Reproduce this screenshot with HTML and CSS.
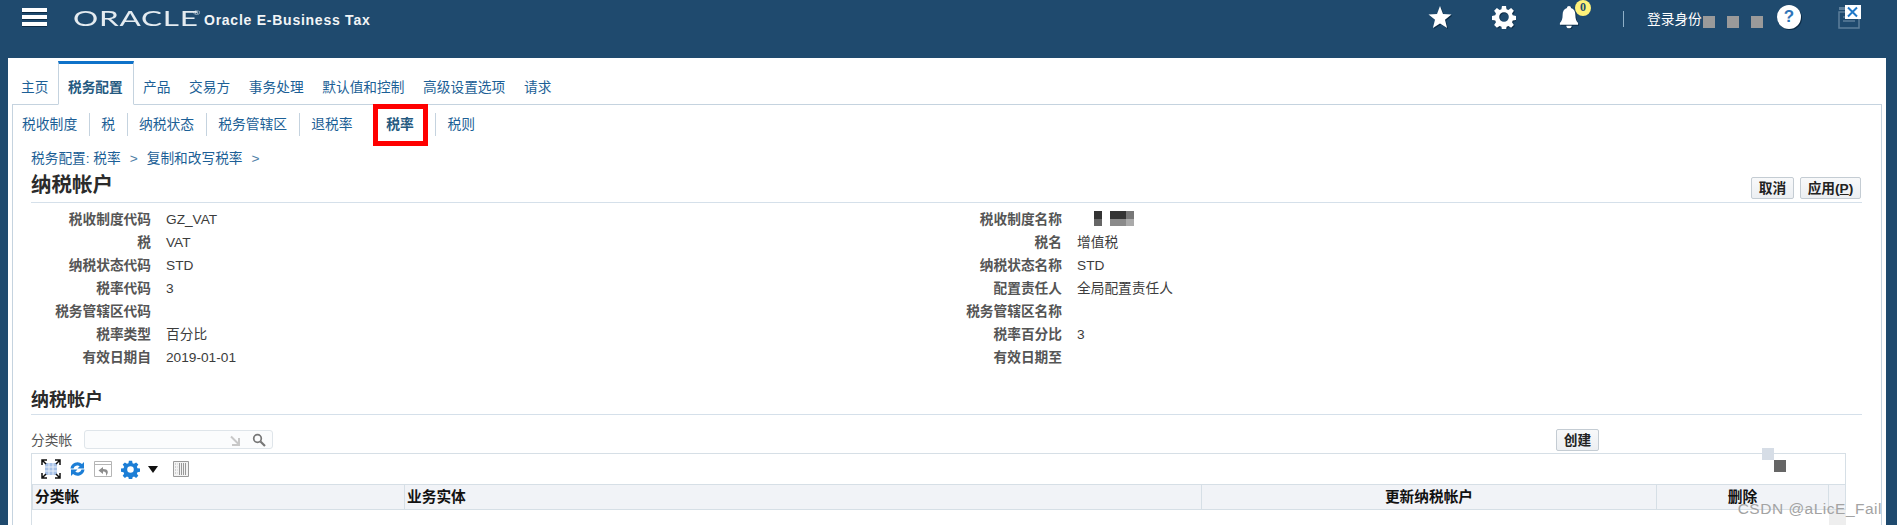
FILE: index.html
```html
<!DOCTYPE html>
<html lang="zh-CN">
<head>
<meta charset="utf-8">
<title>Oracle E-Business Tax</title>
<link rel="stylesheet" href="styles.css">
</head>
<body>
<header class="topbar">
  <div class="burger"><i></i><i></i><i></i></div>
  <span class="logo">ORACLE<sup>®</sup></span>
  <span class="product">Oracle E-Business Tax</span>
  <div class="topright">
    <svg class="ti star" width="24" height="24" viewBox="0 0 24 24"><path class="shadow" d="M12 1l3 7.900 8.500.6-6.500 5.300 2.100 8.200-7.100-4.500-7.100 4.500 2.100-8.200L.5 9.500 9 8.900z"/></svg>
    <svg class="ti gear" width="24" height="24" viewBox="0 0 26 26"><path class="shadow" fill-rule="evenodd" d="M10.800 1h4.400l.6 3.500 2 .8 2.900-2 3 3-2 2.900.8 2 3.500.6v4.400l-3.500.6-.8 2 2 2.900-3 3-2.900-2-2 .8-.6 3.500h-4.400l-.6-3.500-2-.8-2.900 2-3-3 2-2.900-.8-2-3.500-.6v-4.400l3.500-.6.800-2-2-2.900 3-3 2.900 2 2-.8zM13 7.800a5.200 5.200 0 1 0 0 10.400 5.200 5.200 0 0 0 0-10.400z"/></svg>
    <div class="bellwrap">
      <svg class="ti bell" width="20" height="24" viewBox="0 0 22 26"><path class="shadow" d="M11 1c1.300 0 2.200.9 2.200 2 3.500.9 4.800 3.800 4.800 7.500 0 4.500 1 7 3 9v2H1v-2c2-2 3-4.500 3-9C4 6.800 5.300 3.900 8.800 3c0-1.100.9-2 2.200-2zM8 22.500h6c0 1.800-1.300 3-3 3s-3-1.200-3-3z"/></svg>
      <span class="badge">0</span>
    </div>
    <span class="vsep"></span>
    <span class="login">登录身份</span>
    <span class="mask"></span><span class="mask"></span><span class="mask last"></span>
    <span class="help">?</span>
    <div class="logout">
      <svg width="22" height="24" viewBox="0 0 22 24"><g fill="none" stroke="#5d7f9b" stroke-width="1.500"><path d="M1 6h20v16H1z"/><path d="M1 2.500h14" stroke-width="3"/><path d="M5 11h12M5 15h12" /></g></svg>
      <span class="closex"><svg width="15" height="14" viewBox="0 0 15 14"><path d="M3 2.500l9 9M12 2.500l-9 9" stroke="#1f78c8" stroke-width="2" fill="none"/></svg></span>
    </div>
  </div>
</header>

<main class="panel">
  <nav class="tabs">
    <a class="tab first">主页</a>
    <a class="tab active">税务配置</a>
    <a class="tab">产品</a>
    <a class="tab">交易方</a>
    <a class="tab">事务处理</a>
    <a class="tab">默认值和控制</a>
    <a class="tab">高级设置选项</a>
    <a class="tab">请求</a>
  </nav>
  <section class="body">
    <nav class="subtabs">
      <a class="sub">税收制度</a>
      <a class="sub">税</a>
      <a class="sub">纳税状态</a>
      <a class="sub">税务管辖区</a>
      <a class="sub">退税率</a>
      <a class="sub current">税率</a>
      <a class="sub">税则</a>
    </nav>
    <div class="content">
      <div class="crumbs"><a>税务配置: 税率</a><span class="gt">&gt;</span><a>复制和改写税率</a><span class="gt">&gt;</span></div>
      <div class="titlebar">
        <h1>纳税帐户</h1>
        <div class="actions"><button class="btn">取消</button><button class="btn wide">应用(<u>P</u>)</button></div>
      </div>
      <dl class="info">
        <dt>税收制度代码</dt><dd>GZ_VAT</dd><dt>税收制度名称</dt><dd class="blurred"><span class="px"></span></dd>
        <dt>税</dt><dd>VAT</dd><dt>税名</dt><dd>增值税</dd>
        <dt>纳税状态代码</dt><dd>STD</dd><dt>纳税状态名称</dt><dd>STD</dd>
        <dt>税率代码</dt><dd>3</dd><dt>配置责任人</dt><dd>全局配置责任人</dd>
        <dt>税务管辖区代码</dt><dd></dd><dt>税务管辖区名称</dt><dd></dd>
        <dt>税率类型</dt><dd>百分比</dd><dt>税率百分比</dt><dd>3</dd>
        <dt>有效日期自</dt><dd>2019-01-01</dd><dt>有效日期至</dt><dd></dd>
      </dl>
      <h2>纳税帐户</h2>
      <div class="filter">
        <label>分类帐</label>
        <div class="search">
          <svg width="12" height="12" viewBox="0 0 12 12"><path d="M2 1.500l8 8M10 3v7H3" stroke="#c8c8c8" stroke-width="2" fill="none"/></svg>
          <svg width="14" height="14" viewBox="0 0 14 14"><circle cx="5.500" cy="5.500" r="3.800" fill="none" stroke="#777" stroke-width="1.700"/><path d="M8.500 8.500l4.500 4.500" stroke="#777" stroke-width="2.200"/></svg>
        </div>
        <button class="btn create">创建</button>
      </div>
      <div class="tablebox">
        <div class="toolbar">
          <svg class="tool" width="20" height="20" viewBox="0 0 20 20"><path d="M4 4h12v12H4z" fill="#a8c2e8"/><path d="M4 8h12M4 12h12M8 4v12M12 4v12" stroke="#e8f0fa"/><path d="M1 6V1h5M14 1h5v5M19 14v5h-5M6 19H1v-5M1 1l4 4M19 1l-4 4M19 19l-4-4M1 19l4-4" fill="none" stroke="#111" stroke-width="1.500"/></svg>
          <svg class="tool" width="17" height="16" viewBox="0 0 17 16"><path d="M1.500 7.500a7 7 0 0 1 11.500-4.500L15 1v6.500H8.500l2.200-2.200A4 4 0 0 0 4.500 7.500zM15.500 8.500a7 7 0 0 1-11.500 4.500L2 15V8.500h6.500l-2.200 2.200A4 4 0 0 0 12.500 8.500z" fill="#1c7ed6"/></svg>
          <svg class="tool" width="19" height="17" viewBox="0 0 19 17"><path d="M.500 3.500h17M.500.500h17v15H.500z" fill="none" stroke="#b5b5b5"/><path d="M9 6L4.500 9.500 9 13v-2.500c2.500 0 3.500 1 3 4.500 3-3.500 2.500-7-3-7z" fill="#8c8c8c"/></svg>
          <svg class="tool" width="19" height="19" viewBox="0 0 26 26"><path fill="#1c7ed6" fill-rule="evenodd" d="M10.800 1h4.400l.6 3.500 2 .8 2.900-2 3 3-2 2.900.8 2 3.500.6v4.400l-3.500.6-.8 2 2 2.900-3 3-2.900-2-2 .8-.6 3.500h-4.400l-.6-3.500-2-.8-2.900 2-3-3 2-2.900-.8-2-3.500-.6v-4.400l3.500-.6.800-2-2-2.900 3-3 2.900 2 2-.8zM13 8.500a4.500 4.500 0 1 0 0 9 4.500 4.500 0 0 0 0-9z"/></svg>
          <span class="caret"></span>
          <svg class="tool" width="16" height="16" viewBox="0 0 16 16"><path d="M.500.500h15v15H.500z" fill="#f3f3f3" stroke="#999"/><path d="M6.500 2v12M8.500 2v12M10.500 2v12M12.500 2v12" stroke="#999"/><path d="M2 3h2.500M2 6h2.500M2 9h2.500M2 12h2.500" stroke="#aaa" stroke-dasharray="1 1"/></svg>
        </div>
        <table class="grid">
          <colgroup><col class="c1"><col class="c2"><col class="c3"><col class="c4"><col class="c5"></colgroup>
          <thead><tr><th>分类帐</th><th>业务实体</th><th class="ctr">更新纳税帐户</th><th class="ctr">删除</th><th></th></tr></thead>
          <tbody><tr><td></td><td></td><td></td><td></td><td class="scroll"></td></tr></tbody>
        </table>
      </div>
    </div>
  </section>
  <div class="blotch"><i class="b1"></i><i class="b2"></i></div>
  <span class="wm">CSDN @aLicE_Fail</span>
</main>
</body>
</html>
```

FILE: styles.css
```css
* { box-sizing: border-box; }
html, body { margin: 0; height: 525px; overflow: hidden; }
body { background: #1f4a6e; font-family: "Liberation Sans", "Noto Sans CJK SC", sans-serif; font-size: 13.7px; color: #333; }

.topbar { height: 58px; display: flex; align-items: flex-start; color: #fff; position: relative; }
.burger { margin: 8px 0 0 22px; width: 25px; display: flex; flex-direction: column; gap: 3px; }
.burger i { display: block; height: 4px; background: #fff; box-shadow: 0 1px 0 #0b2a44; }
.logo { margin: 5px 0 0 26px; width: 85px; font: 400 21px/26px Lato, sans-serif; letter-spacing: .5px; transform: scaleX(1.5); transform-origin: 0 50%; color: #e4ebf0; position: relative; white-space: nowrap; }
.logo sup { position: absolute; left: 80px; top: 5px; font-size: 6px; line-height: 6px; letter-spacing: 0; }
.product { margin: 11px 0 0 46px; font: bold 14px/18px "Liberation Sans", sans-serif; letter-spacing: .75px; color: #f2f5f7; }
.topright { margin-left: auto; display: flex; align-items: flex-start; height: 58px; }
.ti { display: block; }
.shadow { fill: #fff; filter: drop-shadow(1px 1px 0 #0b2a44); }
.star { margin: 5px 0 0 0; }
.gear { margin: 5px 0 0 40px; }
.bellwrap { position: relative; margin: 5px 0 0 43px; }
.badge { position: absolute; left: 16px; top: -5px; width: 16px; height: 16px; border-radius: 50%; background: #fff27a; color: #1f4a6e; font: bold 12px/15px "Liberation Serif", serif; text-align: center; }
.vsep { width: 1px; height: 16px; margin: 11px 0 0 44px; background: #8fb0c8; }
.login { margin: 10px 0 0 23px; font-size: 13.7px; line-height: 20px; color: #fff; width: 56px; white-space: nowrap; }
.mask { width: 12px; height: 12px; margin: 16px 12px 0 0; background: #9a9a9a; }
.mask.last { margin-right: 14px; }
.help { width: 24px; height: 24px; margin: 5px 0 0 0; border-radius: 50%; background: #fff; color: #2f74b8; font: bold 17px/24px "Liberation Sans", sans-serif; text-align: center; box-shadow: 1px 1px 0 #0b2a44; }
.logout { position: relative; width: 24px; margin: 6px 35px 0 37px; }
.logout svg { display: block; }
.closex { position: absolute; left: 7px; top: -1px; width: 16px; height: 14px; background: #fff; }

.panel { position: relative; margin: 0 11px 0 8px; height: 467px; background: #fff; padding: 0 4px; overflow: hidden; }
.tabs { height: 47px; display: flex; align-items: flex-end; margin-bottom: -1px; position: relative; z-index: 1; padding-left: 1px; }
.tab { height: 33px; padding: 6px 8px 0; line-height: 20px; color: #1c5f96; white-space: nowrap; margin-right: 2.700px; }
.tab.first { margin-right: 1.600px; }
.tab.active { height: 44px; padding: 14px 9px 0; margin: 0 1px 0 0; font-weight: bold; color: #24597f; background: #fff; border: 1px solid #c5d3df; border-top: 3px solid #0f72c9; border-bottom: 1px solid #fff; width: 76px; }
.body { height: 421px; border: 1px solid #c5d3df; border-bottom: 0; }
.subtabs { height: 41px; display: flex; align-items: flex-start; font-size: 13.800px; position: relative; z-index: 2; }
.sub { position: relative; padding: 9px 12px 0 12px; line-height: 22px; color: #1c5f96; white-space: nowrap; }
.sub:first-child { padding-left: 9px; }
.sub + .sub::before { content: ""; position: absolute; left: 0; top: 8px; width: 1px; height: 23px; background: #c5d3df; }
.sub.current { font-weight: bold; width: 55px; height: 42px; margin: -1px 7px 0 8px; padding: 5px 0 0; text-align: center; border: 5px solid #f00; color: #24597f; }
.sub.current::before { display: none; }
.sub.current + .sub { padding-left: 13px; }

.content { padding: 3px 19px 0 18px; }
.crumbs { height: 20px; line-height: 20px; color: #1c5f96; display: flex; white-space: nowrap; }
.gt { margin: 0 9px; color: #4d7ea6; }
.titlebar { height: 34px; display: flex; justify-content: space-between; border-bottom: 1px solid #d5e0ea; }
h1 { margin: 0; font-size: 20.5px; line-height: 31px; color: #2b2b2b; font-weight: bold; }
.actions { display: flex; gap: 6px; margin: 8px 1px 0 0; }
.btn { height: 22px; padding: 0 3px; min-width: 43px; border: 1px solid #c4ccd3; border-radius: 2px; background: linear-gradient(#f8f9fa, #eceff2); font: bold 13.7px/19px "Liberation Sans", "Noto Sans CJK SC", sans-serif; color: #222; }
.btn.wide { width: 61px; }

.info { margin: 5px 0 0 -18px; display: grid; grid-template-columns: 138px 773px 138px 1fr; grid-auto-rows: 23px; line-height: 23px; }
.info dt { text-align: right; font-weight: bold; color: #555; white-space: nowrap; }
.info dd { margin: 0; padding-left: 15px; color: #3c3c3c; }
.blurred { position: relative; }
.px { position: absolute; left: 32px; top: 3px; width: 40px; height: 15px; background:
  linear-gradient(#333 55%, #666 55%) 0 0 / 8px 100% no-repeat,
  linear-gradient(#333 50%, #8a8a8a 50%) 16px 0 / 16px 100% no-repeat,
  linear-gradient(#777 50%, #aaa 50%) 32px 0 / 8px 100% no-repeat; }

h2 { margin: 16px 0 0; height: 30px; line-height: 31px; font-size: 18px; font-weight: bold; color: #2b2b2b; border-bottom: 1px solid #d5e0ea; }
.filter { margin-top: 14px; height: 24px; display: flex; align-items: flex-start; }
.filter label { width: 53px; line-height: 24px; color: #555; }
.search { width: 189px; height: 19px; margin-top: 1px; border: 1px solid #dfe5ea; border-radius: 3px; background: #fbfcfd; display: flex; justify-content: flex-end; align-items: center; gap: 11px; padding-right: 6px; }
.search svg:first-child { margin-top: 3px; }
.create { margin: 0 263px 0 auto; }

.tablebox { width: 1815px; height: 200px; border: 1px solid #d6dfe6; }
.toolbar { height: 30px; display: flex; align-items: center; padding-left: 9px; gap: 8px; }
.caret { width: 0; height: 0; margin-left: 0; margin-right: 7px; border: 5px solid transparent; border-top: 7px solid #111; border-bottom: 0; }
.tool { display: block; }
.grid { width: 100%; table-layout: fixed; border-collapse: collapse; }
.c1 { width: 372px; } .c2 { width: 797px; } .c3 { width: 455px; } .c4 { width: 172px; } .c5 { width: 17px; }
th { height: 25px; padding: 0 2px; text-align: left; background: #f1f3f7; color: #111; font-weight: bold; font-size: 14.7px; line-height: 23px; border: 1px solid #d6dfe6; }
th.ctr { text-align: center; }
td { height: 80px; padding: 0; }
td.scroll { background: #eee; }

.blotch { position: absolute; left: 1754px; top: 390px; width: 26px; height: 26px; }
.blotch i { position: absolute; width: 12px; height: 12px; }
.b1 { left: 0; top: 0; background: #d6dde6; }
.b2 { left: 12px; top: 12px; background: #666; }
.wm { position: absolute; right: 4px; bottom: 7px; font: 15.500px/18px "Liberation Sans", sans-serif; letter-spacing: .5px; color: #a3a3a3; }
```
